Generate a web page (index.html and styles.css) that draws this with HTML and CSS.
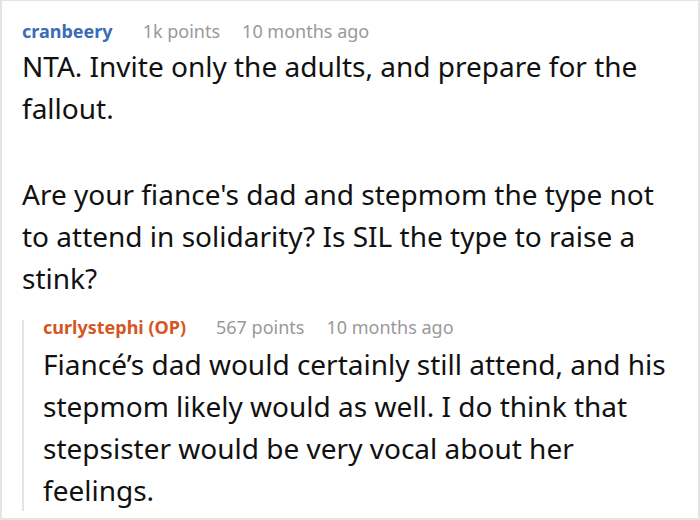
FILE: index.html
```html
<!DOCTYPE html>
<html>
<head>
<meta charset="utf-8">
<link rel="stylesheet" href="styles.css">
</head>
<body>
<div class="card">
  <div class="comment">
    <div class="meta">
      <span class="user user-blue">cranbeery</span>
      <span class="points">1k points</span>
      <span class="time">10 months ago</span>
    </div>
    <div class="body">
      <p>NTA. Invite only the adults, and prepare for the fallout.</p>
      <p>Are your fiance's dad and stepmom the type not to attend in solidarity? Is SIL the type to raise a stink?</p>
    </div>
  </div>
  <div class="reply">
    <div class="meta">
      <span class="user user-orange">curlystephi (OP)</span>
      <span class="points">567 points</span>
      <span class="time">10 months ago</span>
    </div>
    <div class="body">
      <p>Fiancé’s dad would certainly still attend, and his stepmom likely would as well. I do think that stepsister would be very vocal about her feelings.</p>
    </div>
  </div>
</div>
</body>
</html>
```
FILE: styles.css
```css
html, body {
  margin: 0;
  padding: 0;
  background: #fff;
}
.card {
  width: 700px;
  height: 520px;
  box-sizing: border-box;
  border: 2px solid #e4e4e4;
  border-top-width: 1px;
  padding: 23px 20px 0 20px;
  font-family: "Noto Sans", "Open Sans", sans-serif;
  color: #111;
  overflow: hidden;
}
.meta {
  display: flex;
  align-items: baseline;
  font-size: 18px;
  line-height: 14px;
  color: #999;
}
.user {
  font-weight: bold;
  margin-right: 30px;
}
.user-blue { color: #3b6cb7; }
.user-orange { color: #d4571f; }
.points { margin-right: 22px; }
.body {
  font-size: 28px;
  line-height: 42px;
  margin-top: 7px;
}
.body p {
  margin: 0 0 44px 0;
}
.body p:last-child { margin-bottom: 0; }
.reply {
  margin-top: 21px;
  border-left: 2px solid #e4e4e4;
  padding-left: 19px;
}
.reply .body {
  margin-top: 9px;
  margin-bottom: -9px;
}
```
